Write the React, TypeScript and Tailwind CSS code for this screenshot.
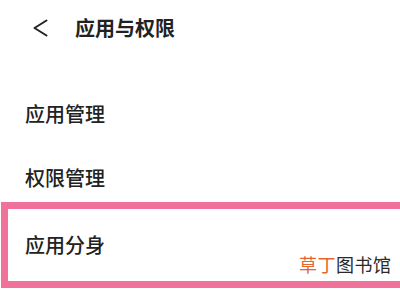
const font = { fontFamily: '"Noto Sans CJK SC", "Noto Sans", sans-serif' };

const rows = ["应用管理", "权限管理"];

export default function App() {
    return (
        <div className="relative w-[400px] h-[300px] overflow-hidden bg-white text-[#222]" style={font}>
            <header className="flex items-center h-14">
                <svg className="ml-[32px] w-[16px] h-[18px]" viewBox="0 0 16 18" fill="none">
                    <path d="M14.5 1.5 L2.5 9 L14.5 16.5" stroke="#222" strokeWidth="2" strokeLinecap="round" strokeLinejoin="round"/>
                </svg>
                <h1 className="ml-[27px] text-[20px] leading-none font-bold">应用与权限</h1>
            </header>

            <div className="mt-[34px] flex flex-col gap-4">
                {rows.map((label) => (
                    <div key={label} className="h-12 flex items-center pl-[25px] text-[20px] font-medium">
                        {label}
                    </div>
                ))}
            </div>

            <div className="ml-px h-[86px] border-l-[7px] border-y-[7px] border-r-0 border-[#f0719a] flex items-center pl-[17px] text-[20px] font-medium">
                应用分身
            </div>

            <div className="absolute left-[299px] top-[254px] text-[18px] leading-[20px] tracking-[0.5px]">
                <span className="text-[#e5652c]">草丁</span>
                <span className="text-[#2a2a2a]">图书馆</span>
            </div>
        </div>
    );
}
